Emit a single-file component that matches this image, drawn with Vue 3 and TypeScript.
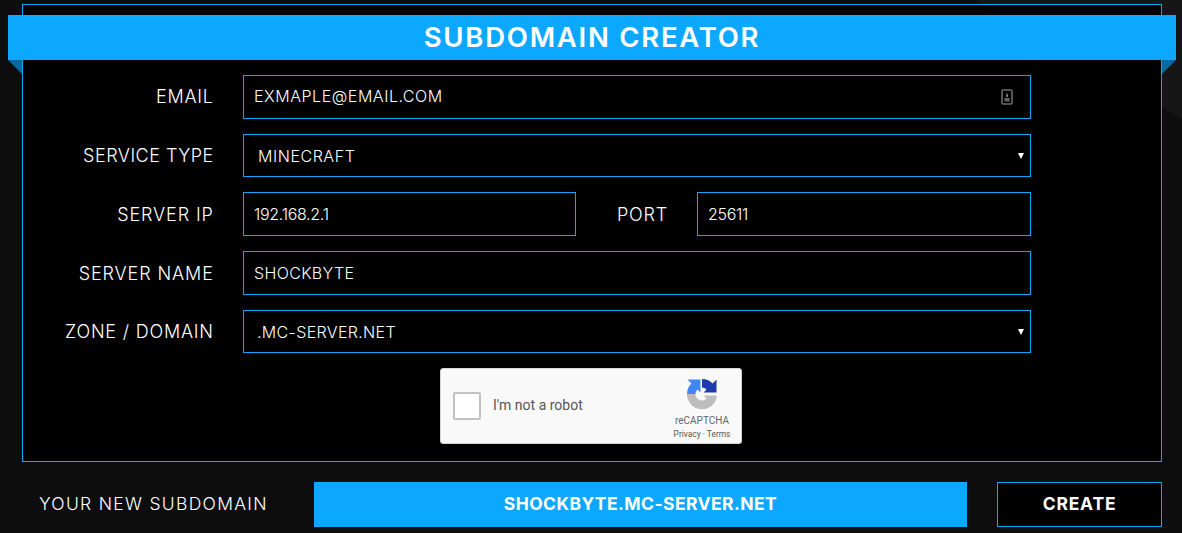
<script setup lang="ts">
const title = 'SUBDOMAIN CREATOR'
</script>

<template>
  <div class="page">
    <section class="panel">
      <h1 class="banner">{{ title }}<i class="fold left"></i><i class="fold right"></i></h1>
      <div class="form">
        <div class="row r1">
          <label class="lab">EMAIL</label>
          <div class="field grow email">
            <span class="wide">EXMAPLE@EMAIL.COM</span>
            <svg class="pm" width="12" height="16" viewBox="0 0 12 16">
              <rect x="1" y="1" width="10" height="14" rx="1" fill="none" stroke="#6b6b6b" stroke-width="1.6"/>
              <path d="M5 8V5.5L6 4l1 1.5V8z" fill="#777"/>
              <rect x="3.5" y="9" width="5" height="3.5" fill="#666"/>
            </svg>
          </div>
        </div>
        <div class="row r2">
          <label class="lab tight">SERVICE TYPE</label>
          <div class="field grow sel"><span class="selpad wide">MINECRAFT</span><i class="caret"></i></div>
        </div>
        <div class="row r3">
          <label class="lab loose">SERVER IP</label>
          <div class="field half ip"><span class="digits">192.168.2.1</span></div>
          <label class="lab port">PORT</label>
          <div class="field half pt"><span class="digits">25611</span></div>
        </div>
        <div class="row r4">
          <label class="lab loose">SERVER NAME</label>
          <div class="field grow"><span>SHOCKBYTE</span></div>
        </div>
        <div class="row r5">
          <label class="lab">ZONE / DOMAIN</label>
          <div class="field grow sel"><span class="selzone">.MC-SERVER.NET</span><i class="caret"></i></div>
        </div>
        <div class="captcha">
          <span class="box"></span>
          <span class="robot">I'm not a robot</span>
          <div class="brand">
            <svg width="32" height="32" viewBox="0 0 32 32">
              <path d="M1 16 H9.5 A6.5 6.5 0 0 0 20.6 20.6 L17.5 17.5 H30.5 V20 A15 15 0 0 1 1 16 Z" fill="#bdbdbd"/>
              <path d="M16 1 A15 15 0 0 1 26.6 5.4 L30.5 1.5 V14.5 H17.5 L20.6 11.4 A6.5 6.5 0 0 0 16 9.5 Z" fill="#1c3aa9"/>
              <path d="M1 16 H9.5 A6.5 6.5 0 0 1 11.4 11.4 L14.5 14.5 V1.5 H1.5 L5.4 5.4 A15 15 0 0 0 1 16 Z" fill="#4285f4"/>
            </svg>
            <span class="rc">reCAPTCHA</span>
            <span class="pt2">Privacy · Terms</span>
          </div>
        </div>
      </div>
    </section>
    <footer class="bottom">
      <span class="your">YOUR NEW SUBDOMAIN</span>
      <div class="result">SHOCKBYTE.MC-SERVER.NET</div>
      <button class="create">CREATE</button>
    </footer>
  </div>
</template>

<style>
html, body { margin: 0; background: #0d0d0d; }
</style>

<style scoped>
.page {
  width: 1182px;
  height: 533px;
  overflow: hidden;
  box-sizing: border-box;
  padding: 4px 20px 0 22px;
  background:
    linear-gradient(30deg, transparent 0 90.1%, #161616 90.3%),
    #0d0d0d;
  font-family: Inter, "Liberation Sans", sans-serif;
  color: #fff;
}
.panel {
  box-sizing: border-box;
  height: 458px;
  border: 1px solid #0ca8ff;
  background: #000;
  padding-top: 10px;
}
.banner {
  position: relative;
  margin: 0 -15px 0 -15px;
  height: 45px;
  line-height: 45px;
  background: #0ca8ff;
  text-align: center;
  font-size: 27.5px;
  font-weight: 600;
  letter-spacing: 1.75px;
}
.fold { position: absolute; top: 45px; width: 0; height: 0; border-top: 14px solid #056a9f; }
.fold.left { left: 0; border-left: 14px solid transparent; }
.fold.right { right: 0; border-right: 14px solid transparent; }
.form { padding: 15px 130px 0 0; }
.row { display: flex; align-items: center; height: 44px; margin-bottom: 15px; }
.r2, .r5 { height: 43px; margin-bottom: 15px; }
.lab {
  width: 190.8px;
  flex: none;
  margin-right: 29.2px;
  text-align: right;
  font-size: 18px;
  font-weight: 350;
  letter-spacing: 0.8px;
  white-space: nowrap;
}
.lab.tight { letter-spacing: 0.5px; }
.lab.loose { letter-spacing: 0.9px; }
.field {
  box-sizing: border-box;
  height: 100%;
  border: 1px solid #0ca8ff;
  display: flex;
  align-items: center;
  padding: 0 10px;
  font-size: 16px;
  font-weight: 350;
  letter-spacing: 0.35px;
  color: #fff;
  white-space: nowrap;
}
.r1 .lab, .r1 .wide { padding-bottom: 2px; }
.wide { letter-spacing: 0.55px; }
.digits { letter-spacing: -0.3px; }
.grow { flex: 1; }
.half { width: 333px; flex: none; }
.pt { width: 334px; }
.lab.port { width: auto; flex: 1; margin-right: 29px; }
.email { justify-content: space-between; padding-right: 17px; }
.sel { justify-content: space-between; padding-right: 6px; }
.selpad { padding-left: 4px; }
.selzone { padding-left: 3px; }
.caret { width: 0; height: 0; border: 3px solid transparent; border-top: 6px solid #fff; border-bottom: 0; }
.captcha {
  box-sizing: border-box;
  width: 302px;
  height: 76px;
  margin: 0 0 0 417px;
  display: flex;
  align-items: center;
  padding: 0 11px 0 12px;
  background: #f9f9f9;
  border: 1px solid #d3d3d3;
  border-radius: 3px;
  font-family: Roboto, sans-serif;
  color: #555;
}
.box {
  box-sizing: border-box;
  width: 28px;
  height: 28px;
  background: #fff;
  border: 2px solid #c1c1c1;
  border-radius: 2px;
}
.robot { margin-left: 12px; padding-bottom: 2px; font-size: 14px; flex: 1; }
.brand { display: flex; flex-direction: column; align-items: center; width: 56px; margin-top: 6px; }
.rc { font-size: 10px; line-height: 14px; margin-top: 4px; color: #666; }
.pt2 { font-size: 8.4px; line-height: 12px; white-space: nowrap; }
.bottom { display: flex; align-items: center; height: 45px; margin-top: 20px; }
.your {
  width: 292px;
  flex: none;
  box-sizing: border-box;
  padding: 0 0 2px 17px;
  font-size: 17.5px;
  font-weight: 350;
  letter-spacing: 1.3px;
  white-space: nowrap;
}
.result {
  width: 653px;
  height: 45px;
  line-height: 43px;
  text-align: center;
  background: #0ca8ff;
  font-size: 17.5px;
  font-weight: 700;
  letter-spacing: 0.43px;
}
.create {
  width: 165px;
  height: 45px;
  margin-left: 30px;
  padding: 0 0 2px;
  background: #000;
  border: 1px solid #0ca8ff;
  color: #fff;
  font: 700 17.5px Inter, sans-serif;
  letter-spacing: 0.8px;
}
</style>
